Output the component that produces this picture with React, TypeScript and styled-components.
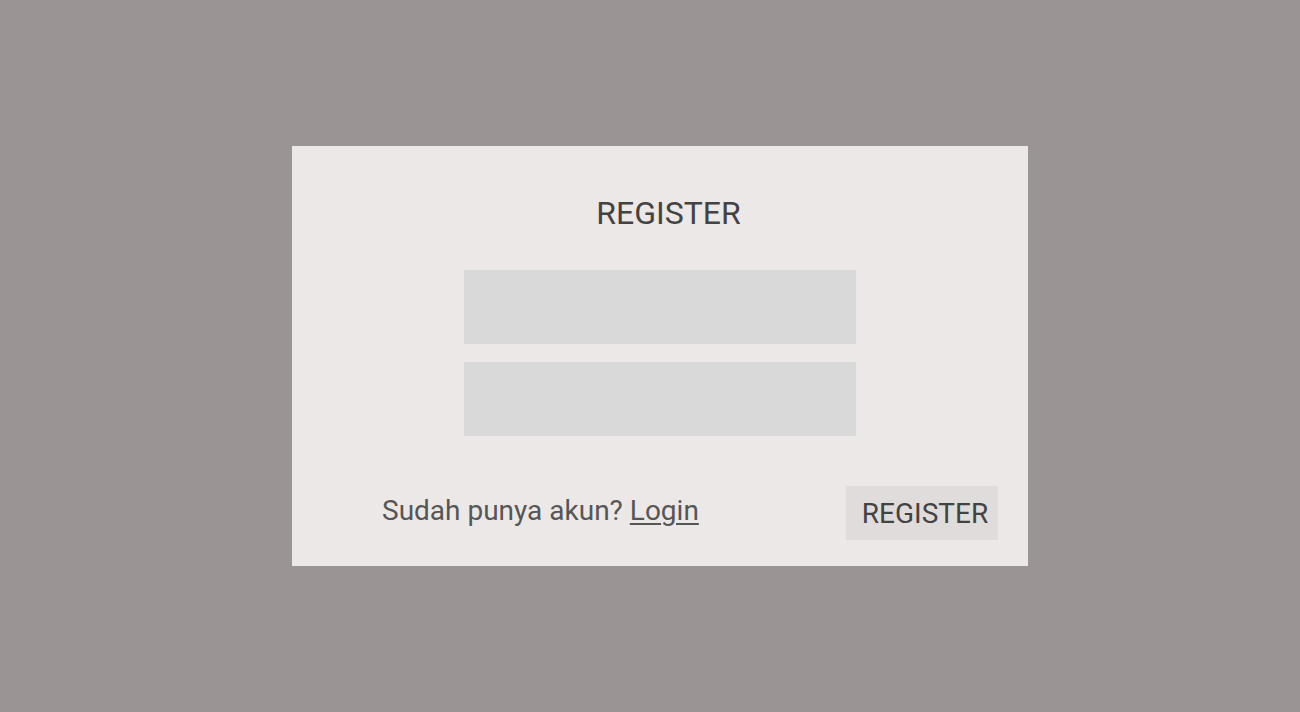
import React from "react";
import styled, { createGlobalStyle } from "styled-components";

const Global = createGlobalStyle`
  html, body { margin: 0; padding: 0; height: 100%; }
  body { background: #9a9594; font-family: Roboto, "Liberation Sans", sans-serif; }
  #root { height: 100%; }
`;

const Page = styled.div`
  height: 712px;
  display: flex;
  align-items: center;
  justify-content: center;
  padding-left: 20px;
  box-sizing: border-box;
`;

const Card = styled.form`
  width: 736px;
  height: 420px;
  box-sizing: border-box;
  background: #ece8e7;
  display: flex;
  flex-direction: column;
  align-items: center;
  padding-top: 48px;
`;

const Title = styled.h1`
  margin: 0 0 0 17px;
  font-weight: 400;
  font-size: 32px;
  line-height: 38px;
  color: #444343;
`;

const Fields = styled.div`
  display: flex;
  flex-direction: column;
  gap: 18px;
  margin-top: 38px;
`;

const Input = styled.input`
  width: 392px;
  height: 74px;
  box-sizing: border-box;
  border: none;
  background: #d9d9d9;
  outline: none;
  padding: 0 12px;
  font-family: inherit;
  font-size: 20px;
`;

const Footer = styled.div`
  align-self: stretch;
  display: flex;
  align-items: center;
  justify-content: space-between;
  padding: 0 30px 0 90px;
  margin-top: 50px;
`;

const Prompt = styled.p`
  margin: 0 0 4px;
  font-size: 28px;
  line-height: 34px;
  color: #575656;
`;

const LoginLink = styled.a`
  color: #575656;
  text-decoration: underline;
  text-underline-offset: 3px;
  text-decoration-thickness: 2px;
  cursor: pointer;
`;

const Button = styled.button`
  width: 152px;
  height: 54px;
  border: none;
  background: #dfdcdb;
  color: #444343;
  font-family: inherit;
  font-size: 28px;
  padding: 0 0 0 6px;
  cursor: pointer;
`;

export default function App() {
  return (
    <>
      <Global />
      <Page>
        <Card onSubmit={(e) => e.preventDefault()}>
          <Title>REGISTER</Title>
          <Fields>
            <Input type="text" aria-label="username" />
            <Input type="password" aria-label="password" />
          </Fields>
          <Footer>
            <Prompt>
              Sudah punya akun? <LoginLink>Login</LoginLink>
            </Prompt>
            <Button type="submit">REGISTER</Button>
          </Footer>
        </Card>
      </Page>
    </>
  );
}
